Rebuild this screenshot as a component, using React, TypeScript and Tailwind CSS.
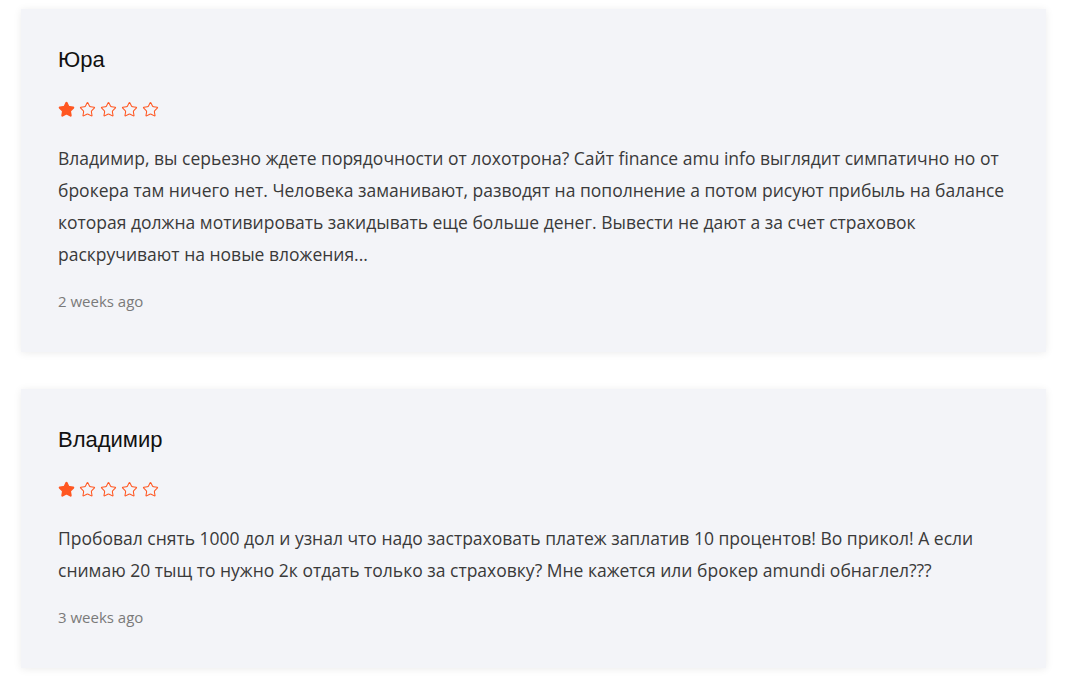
import { Star } from 'lucide-react';

type Review = {
  name: string;
  rating: number;
  text: string;
  date: string;
};

const reviews: Review[] = [
  {
    name: 'Юра',
    rating: 1,
    text: 'Владимир, вы серьезно ждете порядочности от лохотрона? Сайт finance amu info выглядит симпатично но от брокера там ничего нет. Человека заманивают, разводят на пополнение а потом рисуют прибыль на балансе которая должна мотивировать закидывать еще больше денег. Вывести не дают а за счет страховок раскручивают на новые вложения...',
    date: '2 weeks ago',
  },
  {
    name: 'Владимир',
    rating: 1,
    text: 'Пробовал снять 1000 дол и узнал что надо застраховать платеж заплатив 10 процентов! Во прикол! А если снимаю 20 тыщ то нужно 2к отдать только за страховку? Мне кажется или брокер amundi обнаглел???',
    date: '3 weeks ago',
  },
];

const Stars = ({ rating }: { rating: number }) => (
  <div className="flex items-center gap-[4px] h-4">
    {[1, 2, 3, 4, 5].map(i => (
      <Star
        key={i}
        className="w-[17px] h-[17px] text-[#ff5722]"
        strokeWidth={i <= rating ? 2 : 1.5}
        fill={i <= rating ? '#ff5722' : 'none'}
      />
    ))}
  </div>
);

const ReviewCard = ({ review }: { review: Review }) => (
  <div className="bg-[#f3f4f8] shadow-[0_1px_8px_rgba(0,0,0,0.08)] px-[37px] pt-[39px] pb-[41px]">
    <h3 className="font-['Liberation_Sans',Arial,sans-serif] text-[22px] leading-6 text-[#111]">{review.name}</h3>
    <div className="mt-[29px]">
      <Stars rating={review.rating} />
    </div>
    <p className="mt-[25px] text-[17.5px] leading-8 text-[#3a3a3a]">{review.text}</p>
    <p className="mt-[21px] text-[15px] leading-5 text-[#7a7a7a]">{review.date}</p>
  </div>
);

export default function App() {
  return (
    <div className="min-h-screen bg-white font-['Open_Sans',sans-serif] pt-[9px] pl-[21px] pr-[22px]">
      <div className="flex flex-col gap-[37px]">
        {reviews.map(r => (
          <ReviewCard key={r.name} review={r} />
        ))}
      </div>
    </div>
  );
}
